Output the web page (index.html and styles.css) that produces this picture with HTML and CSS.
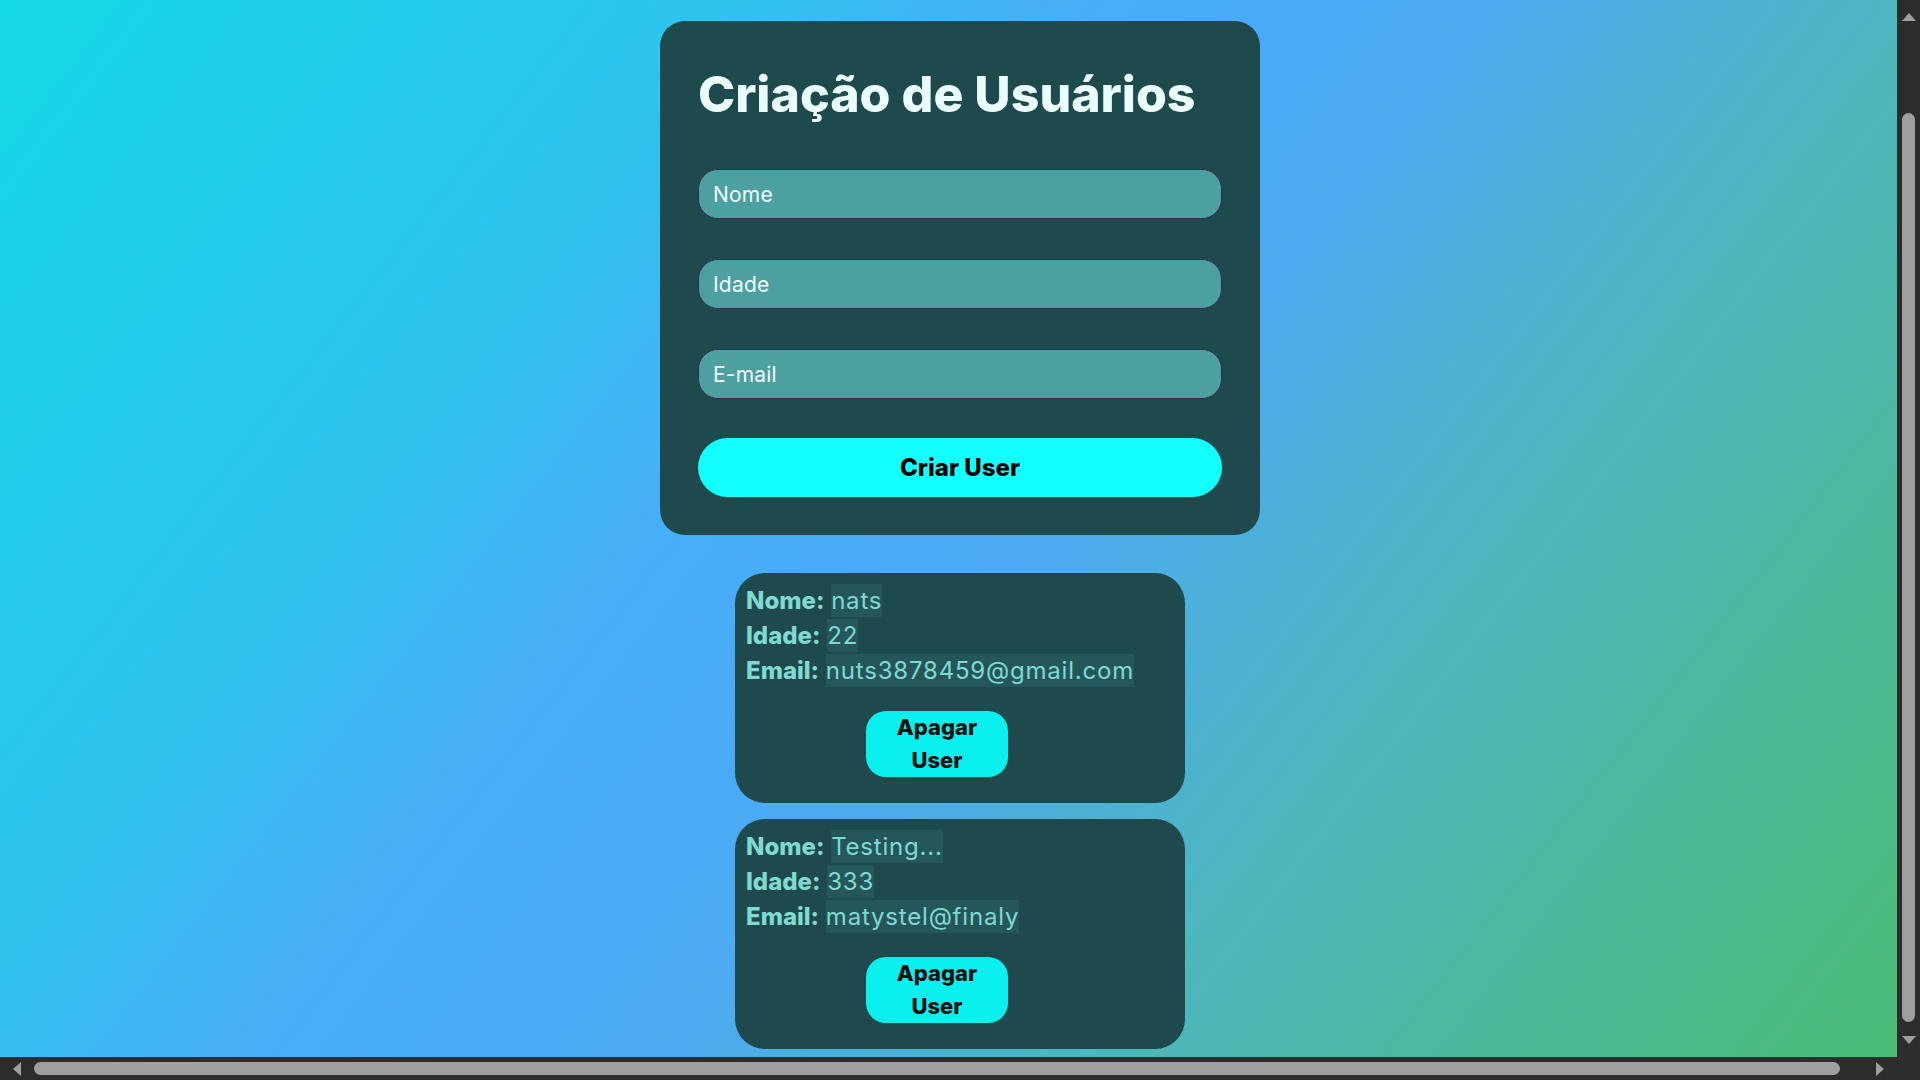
FILE: index.html
```html
<!DOCTYPE html>
<html lang="pt-BR">
<head>
<meta charset="utf-8">
<title>Criação de Usuários</title>
<link rel="stylesheet" href="styles.css">
</head>
<body>
<main class="page">
  <form class="form-card">
    <h1 class="title">Criação de Usuários</h1>
    <input class="field" type="text" placeholder="Nome">
    <input class="field" type="number" placeholder="Idade">
    <input class="field" type="email" placeholder="E-mail">
    <button class="create-btn" type="button">Criar User</button>
  </form>

  <ul class="user-list">
    <li class="user-card">
      <p class="line"><strong class="label">Nome:</strong> <span class="val">nats</span></p>
      <p class="line"><strong class="label">Idade:</strong> <span class="val">22</span></p>
      <p class="line"><strong class="label">Email:</strong> <span class="val">nuts3878459@gmail.com</span></p>
      <button class="delete-btn" type="button">Apagar User</button>
    </li>
    <li class="user-card">
      <p class="line"><strong class="label">Nome:</strong> <span class="val">Testing...</span></p>
      <p class="line"><strong class="label">Idade:</strong> <span class="val">333</span></p>
      <p class="line"><strong class="label">Email:</strong> <span class="val">matystel@finaly</span></p>
      <button class="delete-btn" type="button">Apagar User</button>
    </li>
  </ul>
</main>

<div class="scrollbar scrollbar--v" aria-hidden="true">
  <span class="sb-arrow sb-arrow--up"></span>
  <span class="sb-track"><span class="sb-thumb" style="margin-top:92px;height:909px"></span></span>
  <span class="sb-arrow sb-arrow--down"></span>
</div>
<div class="scrollbar scrollbar--h" aria-hidden="true">
  <span class="sb-arrow sb-arrow--left"></span>
  <span class="sb-track"><span class="sb-thumb" style="margin-left:13px;width:1806px"></span></span>
  <span class="sb-arrow sb-arrow--right"></span>
</div>
</body>
</html>
```

FILE: styles.css
```css
html {
  background: linear-gradient(128deg, #14d8e6 0%, #30c3ee 27%, #45b0f6 37%, #4aaaf8 47%, #4cabf0 54%, #4db6bf 69%, #4bbd72 100%) fixed;
}

body {
  margin: 0;
  min-height: 100vh;
  font-family: "Inter", "DejaVu Sans", sans-serif;
}

.page {
  display: flex;
  flex-direction: column;
  align-items: center;
  padding: 21px 0 30px;
}

/* ---------- form card ---------- */
.form-card {
  width: 600px;
  box-sizing: border-box;
  padding: 38px;
  background: #1f4a4d;
  border-radius: 25px;
  display: flex;
  flex-direction: column;
}

.title {
  margin: 0 0 40px;
  font-size: 50px;
  line-height: 70px;
  font-weight: 800;
  letter-spacing: 0;
  color: #eafffe;
}

.field {
  height: 50px;
  box-sizing: border-box;
  margin: 0 0 40px;
  padding: 0 14px;
  border: 1px solid #3a2c50;
  border-radius: 20px;
  background: #4ca09f;
  font-family: inherit;
  font-size: 21px;
  letter-spacing: 0.2px;
  color: #f2fffe;
  outline: none;
}

.field::placeholder {
  color: #f2fffe;
  opacity: 1;
}

.field:nth-of-type(3) {
  margin-bottom: 39px;
}

.create-btn {
  height: 59px;
  border: 0;
  border-radius: 30px;
  background: #13ffff;
  font-family: inherit;
  font-size: 24px;
  font-weight: 800;
  color: #000;
  cursor: pointer;
}

/* ---------- user list ---------- */
.user-list {
  list-style: none;
  margin: 38px 0 0;
  padding: 0;
  display: flex;
  flex-direction: column;
  gap: 16px;
}

.user-card {
  width: 450px;
  box-sizing: border-box;
  padding: 10px 11px 26px;
  background: #1f4a4d;
  border-radius: 30px;
  display: flex;
  flex-direction: column;
  align-items: flex-start;
}

.line {
  margin: 0;
  font-size: 24px;
  line-height: 35px;
  color: #7fdad2;
}

.label {
  font-weight: 800;
  letter-spacing: 0;
}

.val {
  padding: 2px 0;
  background: #25575a;
  letter-spacing: 0.8px;
}

.delete-btn {
  width: 142px;
  margin: 23px 0 0 120px;
  padding: 0 10px;
  border: 0;
  border-radius: 20px;
  background: #0af0ee;
  font-family: inherit;
  font-size: 22px;
  font-weight: 800;
  line-height: 33px;
  color: #111;
  cursor: pointer;
}

/* ---------- window scrollbars (drawn over the page edge) ---------- */
.scrollbar {
  position: fixed;
  display: flex;
  background: #2c2c2c;
}

.scrollbar--v {
  top: 0;
  right: 0;
  bottom: 0;
  width: 23px;
  flex-direction: column;
  align-items: center;
  padding-bottom: 23px;
  box-sizing: border-box;
}

.scrollbar--h {
  left: 0;
  bottom: 0;
  width: 1897px;
  height: 23px;
  flex-direction: row;
  align-items: center;
}

.sb-track {
  flex: 1;
  display: flex;
}

.scrollbar--v .sb-track {
  flex-direction: column;
  align-items: center;
}

.scrollbar--h .sb-track {
  align-items: center;
}

.sb-thumb {
  display: block;
  background: #9f9f9f;
  border-radius: 7px;
}

.scrollbar--v .sb-thumb {
  width: 13px;
}

.scrollbar--h .sb-thumb {
  height: 13px;
}

.sb-arrow {
  display: block;
  width: 0;
  height: 0;
  border-style: solid;
  border-color: transparent;
}

.sb-arrow--up {
  margin-top: 13px;
  border-width: 0 7.5px 8px;
  border-bottom-color: #9f9f9f;
}

.sb-arrow--down {
  margin-bottom: 13px;
  border-width: 8px 7.5px 0;
  border-top-color: #9f9f9f;
}

.sb-arrow--left {
  margin-left: 13px;
  border-width: 7.5px 8px 7.5px 0;
  border-right-color: #9f9f9f;
}

.sb-arrow--right {
  margin-right: 13px;
  border-width: 7.5px 0 7.5px 8px;
  border-left-color: #9f9f9f;
}
```
